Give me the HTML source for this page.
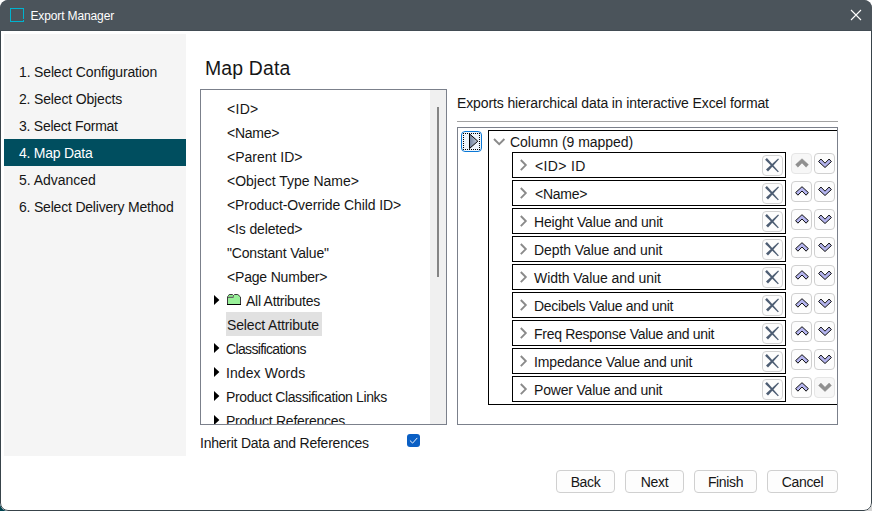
<!DOCTYPE html>
<html lang="en"><head><meta charset="utf-8"><title>Export Manager</title>
<style>
*{box-sizing:content-box}
html,body{margin:0;padding:0}
body{width:872px;height:511px;overflow:hidden;background:#fff;position:relative;
 font-family:"Liberation Sans",sans-serif;font-size:14px;color:#161616;letter-spacing:-0.2px}
.cbl{position:absolute;left:0;top:499px;width:12px;height:12px;background:#00434f}
.cbr{position:absolute;left:860px;top:499px;width:12px;height:12px;background:#d4d4d4}
.win{position:absolute;left:0;top:0;width:872px;height:511px;border-radius:8px;background:#fff;overflow:hidden}
.win::after{content:'';position:absolute;left:0;top:0;width:870px;height:509px;border:1px solid #38434a;border-radius:8px;z-index:1}
.inner{position:absolute;left:1px;top:1px;width:870px;height:509px}
.inner>*{position:absolute}
/* coordinates inside .win are page coords minus 1 */
.tb{left:-1px;top:-1px;width:872px;height:30px;background:#4b545b;border-bottom:1px solid #424c53;z-index:2}
.tb>*{position:absolute}
.ticon{left:10px;top:8px;width:12px;height:12px;border:1px solid #00b3cf;border-right:none;width:13px}
.ticon i{position:absolute;right:0;top:-1px;width:1px;height:11px;background:#00b3cf}
.ticon b{position:absolute;right:0;top:11px;width:1px;height:2px;background:#00b3cf}
.ttext{left:30.4px;top:9px;font-size:12px;line-height:15px;color:#fff;letter-spacing:-0.12px;white-space:nowrap}
.tclose{left:850px;top:9px}
.side{left:3px;top:33px;width:182px;height:422px;background:#f5f5f5}
.si{position:absolute;left:0;width:182px;height:27px;line-height:27px;white-space:nowrap}
.si span{position:absolute;left:15px;top:1px}
.si.sel{background:#004e5f;color:#fff}
.h1{left:204px;top:55px;font-size:19.4px;line-height:24px;letter-spacing:0.18px;white-space:nowrap}
.tree{left:199px;top:88px;width:245px;height:334px;border:1px solid #7b808b;background:#fff;overflow:hidden}
.tree>*{position:absolute}
.sbtrack{left:229px;top:0;width:16px;height:334px;background:#f0f0f0}
.sbthumb{position:absolute;left:7px;top:17px;width:2px;height:170px;background:#858585}
.tr{left:0;width:230px;height:24px;line-height:24px;white-space:nowrap}
.tr>*{position:absolute}
.tl{top:0}
.tl.hl{background:#e1e1e1;top:-1px;height:24px;width:95px;padding:0 0 0 1px;line-height:26px}
.arr{left:13px;top:6px}
.fold{left:26px;top:5px}
.inh{left:199px;top:433px;line-height:18px;white-space:nowrap}
.cb{left:406px;top:433px;width:13px;height:13px;border-radius:3px;background:#0a5fc4}
.cb svg{position:absolute;left:0;top:0}
.desc{left:456px;top:93px;line-height:18px;white-space:nowrap}
.hr{left:456px;top:120px;width:381px;height:1px;background:#a2a2a2}
.panel{left:456px;top:126px;width:379px;height:296px;border:1px solid #7b808b;background:#fff;overflow:hidden}
.panel>*{position:absolute}
/* inside panel: page coords minus 458 (x) / minus 128 (y) */
.play{left:3px;top:3px;width:19px;height:19px;border:1px solid #0a78d6;border-radius:4px;background:#eef5fc}
.play .dots{position:absolute;left:1px;top:1px;width:15px;height:15px;border:1px dotted #000}
.play svg{position:absolute;left:6.5px;top:1px}
.col{left:30px;top:2px;width:400px;height:273px;border:1px solid #000;background:#fff}
.col>*{position:absolute}
/* inside col: page coords minus 489 (x) / minus 131 (y) */
.chv{left:4px;top:7px}
.colt{left:21px;top:2px;line-height:18px;white-space:nowrap}
.row{left:23px;width:272px;height:24px;border:1px solid #000;background:#fff}
.row>*{position:absolute}
.chr{left:7px;top:6px}
.rt{left:22px;top:4px;line-height:18px;white-space:nowrap}
.xb{left:249px;top:2px;width:19px;height:19px;border:1px solid #d2d2d2;border-radius:4px;background:#fdfdfd}
.xb svg{position:absolute;left:0;top:0}
.ab{width:19px;height:19px;border:1px solid #d0d0d0;border-radius:4px;background:#fdfdfd}
.ab.dis{border-color:#e6e6e6;background:#f7f7f7}
.ab svg{position:absolute;left:2.5px}
.btn{top:469px;height:20px;padding-top:1px;letter-spacing:-0.35px;border:1px solid #d0d0d0;border-radius:4px;background:#fdfdfd;text-align:center;line-height:21px;white-space:nowrap}

</style></head>
<body>
<div class="cbl"></div><div class="cbr"></div>
<div class="win"><div class="inner">
<div class="tb"><div class="ticon"><i></i><b></b></div><span class="ttext">Export Manager</span><svg class="tclose" width="12" height="12" viewBox="0 0 12 12"><path d="M1 1 L11 11 M11 1 L1 11" stroke="#fff" stroke-width="1.1" fill="none"/></svg></div>
<div class="side">
<div class="si" style="top:24px"><span style="letter-spacing:-0.156px;">1. Select Configuration</span></div>
<div class="si" style="top:51px"><span style="letter-spacing:-0.164px;">2. Select Objects</span></div>
<div class="si" style="top:78px"><span style="letter-spacing:-0.247px;">3. Select Format</span></div>
<div class="si sel" style="top:105px"><span style="letter-spacing:-0.252px;">4. Map Data</span></div>
<div class="si" style="top:132px"><span style="letter-spacing:-0.031px;">5. Advanced</span></div>
<div class="si" style="top:159px"><span style="letter-spacing:-0.199px;">6. Select Delivery Method</span></div>
</div>
<div class="h1">Map Data</div>
<div class="tree"><div class="sbtrack"><div class="sbthumb"></div></div>
<div class="tr" style="top:7px"><span class="tl" style="left:26px;letter-spacing:0.297px;">&lt;ID&gt;</span></div>
<div class="tr" style="top:31px"><span class="tl" style="left:26px;letter-spacing:-0.241px;">&lt;Name&gt;</span></div>
<div class="tr" style="top:55px"><span class="tl" style="left:26px;letter-spacing:0.000px;">&lt;Parent ID&gt;</span></div>
<div class="tr" style="top:79px"><span class="tl" style="left:26px;letter-spacing:-0.003px;">&lt;Object Type Name&gt;</span></div>
<div class="tr" style="top:103px"><span class="tl" style="left:26px;letter-spacing:-0.092px;">&lt;Product-Override Child ID&gt;</span></div>
<div class="tr" style="top:127px"><span class="tl" style="left:26px;letter-spacing:-0.142px;">&lt;Is deleted&gt;</span></div>
<div class="tr" style="top:151px"><span class="tl" style="left:26px;letter-spacing:-0.176px;">"Constant Value"</span></div>
<div class="tr" style="top:175px"><span class="tl" style="left:26px;letter-spacing:-0.186px;">&lt;Page Number&gt;</span></div>
<div class="tr" style="top:199px"><svg class="arr" width="6" height="11" viewBox="0 0 6 11"><path d="M0 0 L5.4 5 L0 10 Z" fill="#000"/></svg><svg class="fold" width="15" height="12" viewBox="0 0 15 12"><path d="M0.5 10.5 V3 L2.2 0.5 H5.5 L6.5 1.5 L7.5 0.5 H10.8 L13.5 3 V10.5 Z" fill="#98f098" stroke="#3a3a3a" stroke-width="1"/><path d="M1.5 1.6 H5.8 V3 H1.2 Z" fill="#7fd67f"/><path d="M1 3.5 H6.3 V2" fill="none" stroke="#666" stroke-width="1"/><path d="M0 10.5 H14" fill="none" stroke="#000" stroke-width="1"/></svg><span class="tl" style="left:45px;letter-spacing:-0.275px;">All Attributes</span></div>
<div class="tr" style="top:223px"><span class="tl hl" style="left:25px;letter-spacing:-0.145px;">Select Attribute</span></div>
<div class="tr" style="top:247px"><svg class="arr" width="6" height="11" viewBox="0 0 6 11"><path d="M0 0 L5.4 5 L0 10 Z" fill="#000"/></svg><span class="tl" style="left:25px;letter-spacing:-0.641px;">Classifications</span></div>
<div class="tr" style="top:271px"><svg class="arr" width="6" height="11" viewBox="0 0 6 11"><path d="M0 0 L5.4 5 L0 10 Z" fill="#000"/></svg><span class="tl" style="left:25px;letter-spacing:0.091px;">Index Words</span></div>
<div class="tr" style="top:295px"><svg class="arr" width="6" height="11" viewBox="0 0 6 11"><path d="M0 0 L5.4 5 L0 10 Z" fill="#000"/></svg><span class="tl" style="left:25px;letter-spacing:-0.368px;">Product Classification Links</span></div>
<div class="tr" style="top:319px"><svg class="arr" width="6" height="11" viewBox="0 0 6 11"><path d="M0 0 L5.4 5 L0 10 Z" fill="#000"/></svg><span class="tl" style="left:25px;letter-spacing:-0.264px;">Product References</span></div>
</div>
<div class="inh" style="letter-spacing:-0.235px">Inherit Data and References</div>
<div class="cb"><svg width="13" height="13" viewBox="0 0 13 13"><path d="M3.2 6.8 L5.6 9.1 L10 4.2" stroke="#fff" stroke-width="1" stroke-opacity="0.92" fill="none" stroke-linecap="round" stroke-linejoin="round"/></svg></div>
<div class="desc" style="letter-spacing:-0.12px">Exports hierarchical data in interactive Excel format</div>
<div class="hr"></div>
<div class="panel">
<div class="play"><div class="dots"></div><svg width="10" height="17" viewBox="0 0 10 17"><defs><linearGradient id="pg" x1="0" x2="1" y1="0" y2="0"><stop offset="0" stop-color="#71829e"/><stop offset="1" stop-color="#c3cddb"/></linearGradient></defs><path d="M0.5 0.9 L8.8 8.2 L0.5 15.5 Z" fill="url(#pg)" stroke="#000" stroke-width="1"/></svg></div>
<div class="col">
<svg class="chv" width="13" height="8" viewBox="0 0 13 8"><path d="M1 1 L6.2 6.2 L11.4 1" stroke="#8a8a8a" stroke-width="1.9" fill="none"/></svg>
<span class="colt" style="letter-spacing:-0.03px">Column (9 mapped)</span>
<div class="row" style="top:21px">
<svg class="chr" width="8" height="13" viewBox="0 0 8 13"><path d="M0.8 1 L5.8 6.1 L0.8 11.2" stroke="#8a8a8a" stroke-width="1.9" fill="none"/></svg>
<span class="rt" style="left:22px;letter-spacing:0.333px;">&lt;ID&gt; ID</span>
<div class="xb"><svg width="18" height="18" viewBox="0 0 18 18"><path d="M2.1 3.7 L3.9 1.9 L15.8 15.4 L14.9 16.2 Z" fill="#4d5d73"/><path d="M16 3.2 L15.1 2.4 L3 13.6 L5 15.5 Z" fill="#4d5d73"/></svg></div>
</div>
<div class="ab dis" style="left:302px;top:22px"><svg width="14" height="10" viewBox="0 0 14 10" style="top:4px"><path d="M7 0.7 L13.4 6.6 L11.1 9.2 L7 5 L2.9 9.2 L0.6 6.6 Z" fill="#909090" stroke="#909090" stroke-width="0.5"/></svg></div>
<div class="ab" style="left:325px;top:22px"><svg width="14" height="10" viewBox="0 0 14 10" style="top:4px"><path d="M7 9.5 L13.4 3.6 L11.1 1 L7 5.2 L2.9 1 L0.6 3.6 Z" fill="#b4b4ee" stroke="#111" stroke-width="1"/></svg></div>
<div class="row" style="top:49px">
<svg class="chr" width="8" height="13" viewBox="0 0 8 13"><path d="M0.8 1 L5.8 6.1 L0.8 11.2" stroke="#8a8a8a" stroke-width="1.9" fill="none"/></svg>
<span class="rt" style="left:22px;letter-spacing:-0.241px;">&lt;Name&gt;</span>
<div class="xb"><svg width="18" height="18" viewBox="0 0 18 18"><path d="M2.1 3.7 L3.9 1.9 L15.8 15.4 L14.9 16.2 Z" fill="#4d5d73"/><path d="M16 3.2 L15.1 2.4 L3 13.6 L5 15.5 Z" fill="#4d5d73"/></svg></div>
</div>
<div class="ab" style="left:302px;top:50px"><svg width="14" height="10" viewBox="0 0 14 10" style="top:4px"><path d="M7 0.7 L13.4 6.6 L11.1 9.2 L7 5 L2.9 9.2 L0.6 6.6 Z" fill="#b4b4ee" stroke="#111" stroke-width="1"/></svg></div>
<div class="ab" style="left:325px;top:50px"><svg width="14" height="10" viewBox="0 0 14 10" style="top:4px"><path d="M7 9.5 L13.4 3.6 L11.1 1 L7 5.2 L2.9 1 L0.6 3.6 Z" fill="#b4b4ee" stroke="#111" stroke-width="1"/></svg></div>
<div class="row" style="top:77px">
<svg class="chr" width="8" height="13" viewBox="0 0 8 13"><path d="M0.8 1 L5.8 6.1 L0.8 11.2" stroke="#8a8a8a" stroke-width="1.9" fill="none"/></svg>
<span class="rt" style="left:21px;letter-spacing:-0.192px;">Height Value and unit</span>
<div class="xb"><svg width="18" height="18" viewBox="0 0 18 18"><path d="M2.1 3.7 L3.9 1.9 L15.8 15.4 L14.9 16.2 Z" fill="#4d5d73"/><path d="M16 3.2 L15.1 2.4 L3 13.6 L5 15.5 Z" fill="#4d5d73"/></svg></div>
</div>
<div class="ab" style="left:302px;top:78px"><svg width="14" height="10" viewBox="0 0 14 10" style="top:4px"><path d="M7 0.7 L13.4 6.6 L11.1 9.2 L7 5 L2.9 9.2 L0.6 6.6 Z" fill="#b4b4ee" stroke="#111" stroke-width="1"/></svg></div>
<div class="ab" style="left:325px;top:78px"><svg width="14" height="10" viewBox="0 0 14 10" style="top:4px"><path d="M7 9.5 L13.4 3.6 L11.1 1 L7 5.2 L2.9 1 L0.6 3.6 Z" fill="#b4b4ee" stroke="#111" stroke-width="1"/></svg></div>
<div class="row" style="top:105px">
<svg class="chr" width="8" height="13" viewBox="0 0 8 13"><path d="M0.8 1 L5.8 6.1 L0.8 11.2" stroke="#8a8a8a" stroke-width="1.9" fill="none"/></svg>
<span class="rt" style="left:21px;letter-spacing:-0.065px;">Depth Value and unit</span>
<div class="xb"><svg width="18" height="18" viewBox="0 0 18 18"><path d="M2.1 3.7 L3.9 1.9 L15.8 15.4 L14.9 16.2 Z" fill="#4d5d73"/><path d="M16 3.2 L15.1 2.4 L3 13.6 L5 15.5 Z" fill="#4d5d73"/></svg></div>
</div>
<div class="ab" style="left:302px;top:106px"><svg width="14" height="10" viewBox="0 0 14 10" style="top:4px"><path d="M7 0.7 L13.4 6.6 L11.1 9.2 L7 5 L2.9 9.2 L0.6 6.6 Z" fill="#b4b4ee" stroke="#111" stroke-width="1"/></svg></div>
<div class="ab" style="left:325px;top:106px"><svg width="14" height="10" viewBox="0 0 14 10" style="top:4px"><path d="M7 9.5 L13.4 3.6 L11.1 1 L7 5.2 L2.9 1 L0.6 3.6 Z" fill="#b4b4ee" stroke="#111" stroke-width="1"/></svg></div>
<div class="row" style="top:133px">
<svg class="chr" width="8" height="13" viewBox="0 0 8 13"><path d="M0.8 1 L5.8 6.1 L0.8 11.2" stroke="#8a8a8a" stroke-width="1.9" fill="none"/></svg>
<span class="rt" style="left:21px;letter-spacing:-0.060px;">Width Value and unit</span>
<div class="xb"><svg width="18" height="18" viewBox="0 0 18 18"><path d="M2.1 3.7 L3.9 1.9 L15.8 15.4 L14.9 16.2 Z" fill="#4d5d73"/><path d="M16 3.2 L15.1 2.4 L3 13.6 L5 15.5 Z" fill="#4d5d73"/></svg></div>
</div>
<div class="ab" style="left:302px;top:134px"><svg width="14" height="10" viewBox="0 0 14 10" style="top:4px"><path d="M7 0.7 L13.4 6.6 L11.1 9.2 L7 5 L2.9 9.2 L0.6 6.6 Z" fill="#b4b4ee" stroke="#111" stroke-width="1"/></svg></div>
<div class="ab" style="left:325px;top:134px"><svg width="14" height="10" viewBox="0 0 14 10" style="top:4px"><path d="M7 9.5 L13.4 3.6 L11.1 1 L7 5.2 L2.9 1 L0.6 3.6 Z" fill="#b4b4ee" stroke="#111" stroke-width="1"/></svg></div>
<div class="row" style="top:161px">
<svg class="chr" width="8" height="13" viewBox="0 0 8 13"><path d="M0.8 1 L5.8 6.1 L0.8 11.2" stroke="#8a8a8a" stroke-width="1.9" fill="none"/></svg>
<span class="rt" style="left:21px;letter-spacing:-0.299px;">Decibels Value and unit</span>
<div class="xb"><svg width="18" height="18" viewBox="0 0 18 18"><path d="M2.1 3.7 L3.9 1.9 L15.8 15.4 L14.9 16.2 Z" fill="#4d5d73"/><path d="M16 3.2 L15.1 2.4 L3 13.6 L5 15.5 Z" fill="#4d5d73"/></svg></div>
</div>
<div class="ab" style="left:302px;top:162px"><svg width="14" height="10" viewBox="0 0 14 10" style="top:4px"><path d="M7 0.7 L13.4 6.6 L11.1 9.2 L7 5 L2.9 9.2 L0.6 6.6 Z" fill="#b4b4ee" stroke="#111" stroke-width="1"/></svg></div>
<div class="ab" style="left:325px;top:162px"><svg width="14" height="10" viewBox="0 0 14 10" style="top:4px"><path d="M7 9.5 L13.4 3.6 L11.1 1 L7 5.2 L2.9 1 L0.6 3.6 Z" fill="#b4b4ee" stroke="#111" stroke-width="1"/></svg></div>
<div class="row" style="top:189px">
<svg class="chr" width="8" height="13" viewBox="0 0 8 13"><path d="M0.8 1 L5.8 6.1 L0.8 11.2" stroke="#8a8a8a" stroke-width="1.9" fill="none"/></svg>
<span class="rt" style="left:21px;letter-spacing:-0.281px;">Freq Response Value and unit</span>
<div class="xb"><svg width="18" height="18" viewBox="0 0 18 18"><path d="M2.1 3.7 L3.9 1.9 L15.8 15.4 L14.9 16.2 Z" fill="#4d5d73"/><path d="M16 3.2 L15.1 2.4 L3 13.6 L5 15.5 Z" fill="#4d5d73"/></svg></div>
</div>
<div class="ab" style="left:302px;top:190px"><svg width="14" height="10" viewBox="0 0 14 10" style="top:4px"><path d="M7 0.7 L13.4 6.6 L11.1 9.2 L7 5 L2.9 9.2 L0.6 6.6 Z" fill="#b4b4ee" stroke="#111" stroke-width="1"/></svg></div>
<div class="ab" style="left:325px;top:190px"><svg width="14" height="10" viewBox="0 0 14 10" style="top:4px"><path d="M7 9.5 L13.4 3.6 L11.1 1 L7 5.2 L2.9 1 L0.6 3.6 Z" fill="#b4b4ee" stroke="#111" stroke-width="1"/></svg></div>
<div class="row" style="top:217px">
<svg class="chr" width="8" height="13" viewBox="0 0 8 13"><path d="M0.8 1 L5.8 6.1 L0.8 11.2" stroke="#8a8a8a" stroke-width="1.9" fill="none"/></svg>
<span class="rt" style="left:21px;letter-spacing:-0.137px;">Impedance Value and unit</span>
<div class="xb"><svg width="18" height="18" viewBox="0 0 18 18"><path d="M2.1 3.7 L3.9 1.9 L15.8 15.4 L14.9 16.2 Z" fill="#4d5d73"/><path d="M16 3.2 L15.1 2.4 L3 13.6 L5 15.5 Z" fill="#4d5d73"/></svg></div>
</div>
<div class="ab" style="left:302px;top:218px"><svg width="14" height="10" viewBox="0 0 14 10" style="top:4px"><path d="M7 0.7 L13.4 6.6 L11.1 9.2 L7 5 L2.9 9.2 L0.6 6.6 Z" fill="#b4b4ee" stroke="#111" stroke-width="1"/></svg></div>
<div class="ab" style="left:325px;top:218px"><svg width="14" height="10" viewBox="0 0 14 10" style="top:4px"><path d="M7 9.5 L13.4 3.6 L11.1 1 L7 5.2 L2.9 1 L0.6 3.6 Z" fill="#b4b4ee" stroke="#111" stroke-width="1"/></svg></div>
<div class="row" style="top:245px">
<svg class="chr" width="8" height="13" viewBox="0 0 8 13"><path d="M0.8 1 L5.8 6.1 L0.8 11.2" stroke="#8a8a8a" stroke-width="1.9" fill="none"/></svg>
<span class="rt" style="left:21px;letter-spacing:-0.187px;">Power Value and unit</span>
<div class="xb"><svg width="18" height="18" viewBox="0 0 18 18"><path d="M2.1 3.7 L3.9 1.9 L15.8 15.4 L14.9 16.2 Z" fill="#4d5d73"/><path d="M16 3.2 L15.1 2.4 L3 13.6 L5 15.5 Z" fill="#4d5d73"/></svg></div>
</div>
<div class="ab" style="left:302px;top:246px"><svg width="14" height="10" viewBox="0 0 14 10" style="top:4px"><path d="M7 0.7 L13.4 6.6 L11.1 9.2 L7 5 L2.9 9.2 L0.6 6.6 Z" fill="#b4b4ee" stroke="#111" stroke-width="1"/></svg></div>
<div class="ab dis" style="left:325px;top:246px"><svg width="14" height="10" viewBox="0 0 14 10" style="top:4px"><path d="M7 9.5 L13.4 3.6 L11.1 1 L7 5.2 L2.9 1 L0.6 3.6 Z" fill="#909090" stroke="#909090" stroke-width="0.5"/></svg></div>
</div>
</div>
<div class="btn" style="left:555px;width:57px">Back</div>
<div class="btn" style="left:624px;width:57px">Next</div>
<div class="btn" style="left:693px;width:61px">Finish</div>
<div class="btn" style="left:766px;width:69px">Cancel</div>
</div></div>
</body></html>
